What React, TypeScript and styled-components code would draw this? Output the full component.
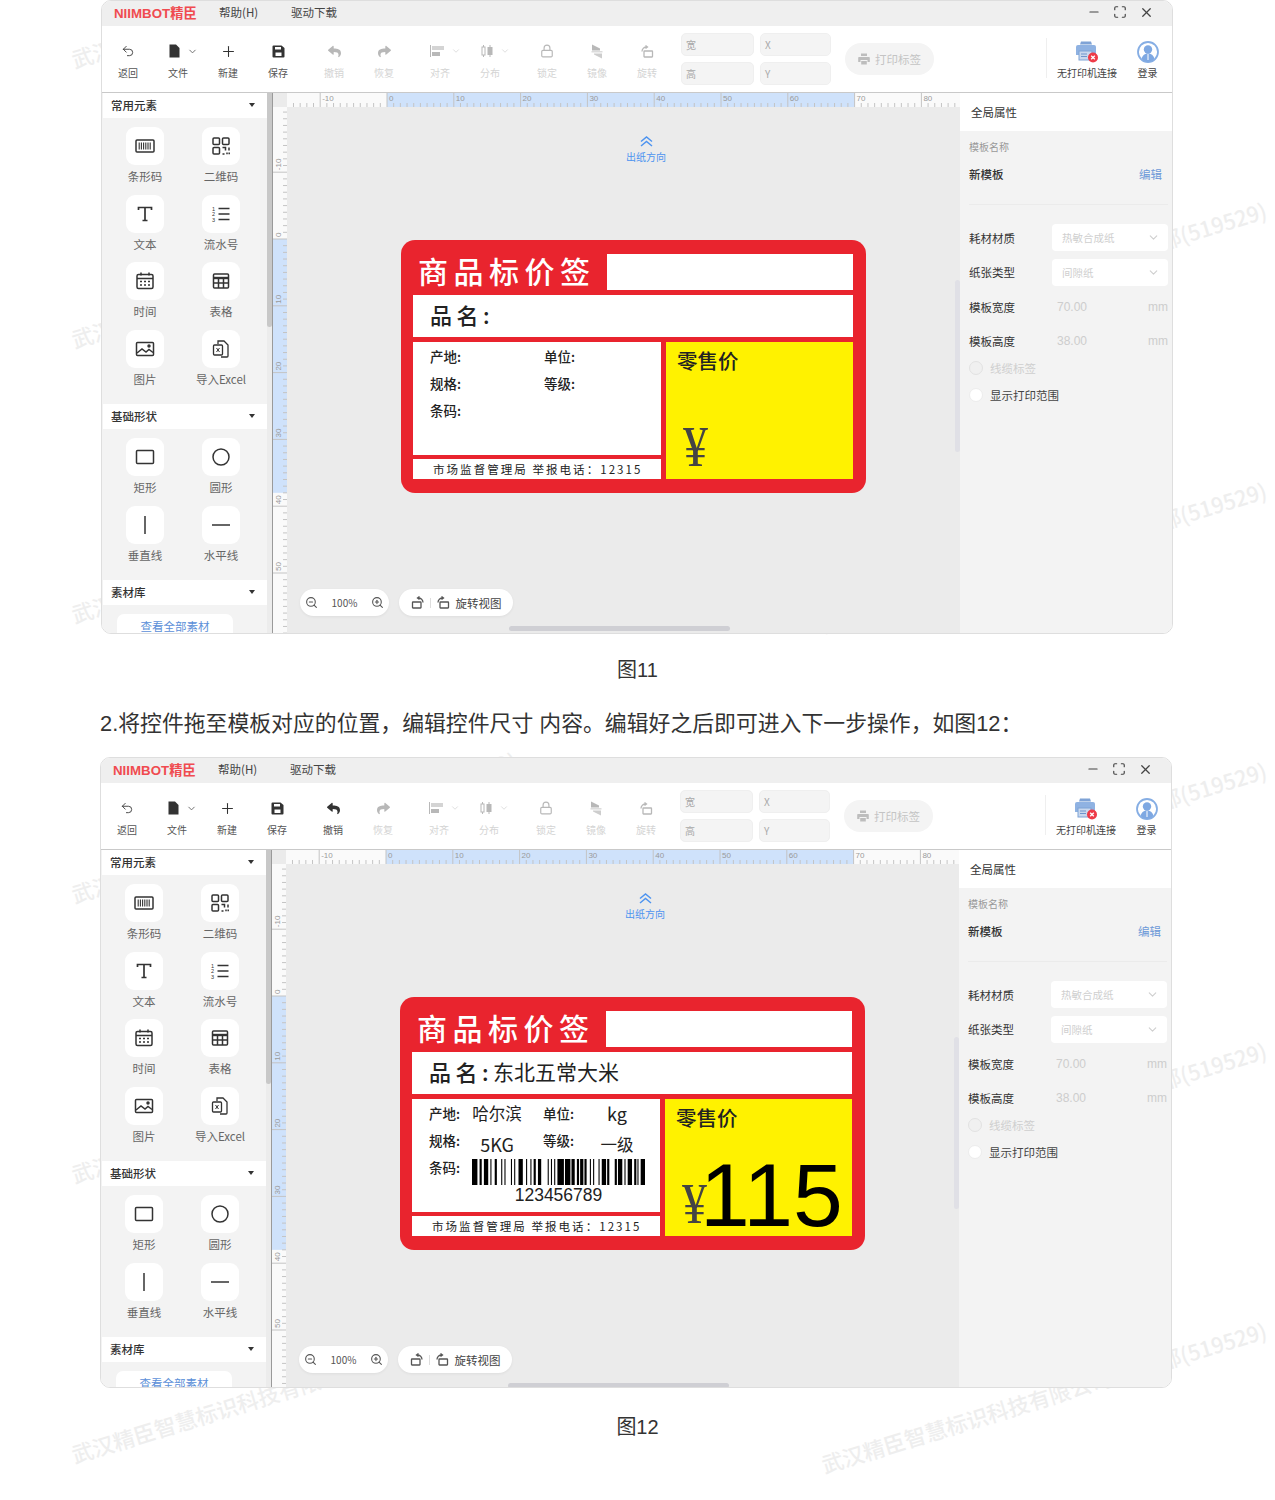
import * as React from "react";
import styled, { createGlobalStyle } from "styled-components";
import { ChevronDown, Lock, Maximize, Minus, Plus, Undo2, X, ZoomIn, ZoomOut } from "lucide-react";
import { FaReply, FaShare } from "react-icons/fa";

const CJK = `"Noto Sans CJK SC", "Noto Sans", sans-serif`;
const MM = 6.68;

const GlobalStyle = createGlobalStyle`
    body {
        margin: 0;
        background: #fff;
        font-family: ${CJK};
    }
`;

const Page = styled.div`
    position: relative;
    width: 1275px;
    height: 1500px;
    overflow: hidden;
    background: #fff;
`;

const Watermark = styled.div<{ $x: number; $y: number }>`
    position: absolute;
    left: ${(p) => p.$x}px;
    top: ${(p) => p.$y}px;
    transform: rotate(-17deg);
    transform-origin: left center;
    white-space: nowrap;
    font-size: 21.6px;
    line-height: 24px;
    color: #eeeeee;
    font-weight: 500;
`;

const Flow = styled.div`
    position: relative;
    z-index: 1;
    display: flex;
    flex-direction: column;
`;

const Caption = styled.div<{ $top: number }>`
    margin-top: ${(p) => p.$top}px;
    text-align: center;
    font-size: 20px;
    line-height: 28px;
    color: #333;
    font-family: "Liberation Sans", ${CJK};
`;

const Paragraph = styled.div`
    margin: 26px 0 19px 100px;
    font-size: 21.85px;
    line-height: 28px;
    color: #333;
    white-space: nowrap;
    font-family: "Liberation Sans", ${CJK};
`;

const Win = styled.div<{ $left: number; $height: number }>`
    margin-left: ${(p) => p.$left}px;
    width: 1072px;
    height: ${(p) => p.$height}px;
    box-sizing: border-box;
    display: flex;
    flex-direction: column;
    border: 1px solid #dedede;
    border-radius: 10px;
    overflow: hidden;
    background: #fff;
`;

const TitleBar = styled.div`
    height: 25px;
    flex: none;
    box-sizing: border-box;
    display: flex;
    align-items: center;
    background: #efefef;
    padding: 0 0 3px 12px;
    font-size: 11.5px;
    color: #444;
`;

const Logo = styled.div`
    width: 105px;
    font-family: "Liberation Sans", ${CJK};
    font-size: 13.3px;
    font-weight: 700;
    color: #f04b50;
    white-space: nowrap;
`;

const MenuItem = styled.div<{ $width: number }>`
    width: ${(p) => p.$width}px;
`;

const WinControls = styled.div`
    margin-left: auto;
    display: flex;
    align-items: center;
    gap: 12px;
    padding-right: 18px;
    color: #444;
`;

const Toolbar = styled.div`
    height: 66px;
    flex: none;
    display: flex;
    align-items: stretch;
    padding-left: 1px;
    border-bottom: 1px solid #c9c9c9;
    background: #fff;
`;

const ToolItem = styled.div<{ $off?: boolean; $gap?: number }>`
    width: 50px;
    margin-left: ${(p) => p.$gap ?? 0}px;
    display: flex;
    flex-direction: column;
    align-items: center;
    padding-top: 16px;
    box-sizing: border-box;
    color: ${(p) => (p.$off ? "#b8b8b8" : "#333")};
`;

const ToolIcon = styled.div<{ $caret?: boolean }>`
    height: 18px;
    display: flex;
    align-items: center;
    gap: ${(p) => (p.$caret ? 7 : 0)}px;
    margin-left: ${(p) => (p.$caret ? 10 : 0)}px;
`;

const ToolLabel = styled.div<{ $off?: boolean }>`
    margin-top: 6px;
    font-size: 10px;
    line-height: 14px;
    color: ${(p) => (p.$off ? "#d4d4d4" : "#555")};
`;

const Caret = styled(ChevronDown)<{ $off?: boolean }>`
    color: ${(p) => (p.$off ? "#d8d8d8" : "#666")};
`;

const FieldGrid = styled.div`
    margin-left: 9px;
    margin-top: 7px;
    display: grid;
    grid-template-columns: 73px 71px;
    grid-auto-rows: 23px;
    gap: 6px;
`;

const Field = styled.div`
    background: #f4f4f4;
    border-radius: 5px;
    border: 1px solid #efefef;
    box-sizing: border-box;
    padding-left: 4px;
    font-size: 10px;
    line-height: 22px;
    color: #a9a9a9;
`;

const PrintButton = styled.div`
    margin: 17px 0 0 14px;
    width: 89px;
    height: 32px;
    border-radius: 16px;
    background: #f4f4f4;
    display: flex;
    align-items: center;
    justify-content: center;
    gap: 5px;
    font-size: 11.5px;
    color: #c4c4c4;
`;

const ToolbarEnd = styled.div`
    margin-left: auto;
    margin-top: 12px;
    height: 40px;
    display: flex;
    border-left: 1px solid #efefef;
    padding-right: 4px;
`;

const StatusItem = styled.div<{ $width: number }>`
    width: ${(p) => p.$width}px;
    padding-top: 2px;
    display: flex;
    flex-direction: column;
    align-items: center;
    font-size: 10px;
    line-height: 14px;
    color: #444;
    gap: 2px;
`;

const StatusIcon = styled.div`
    flex: none;
    height: 24px;
    display: flex;
    align-items: center;
`;

const Body = styled.div`
    flex: 1;
    min-height: 0;
    display: flex;
`;

const Sidebar = styled.div`
    width: 165px;
    flex: none;
    overflow: hidden;
    background: #f3f3f3;
    padding-left: 1px;
    box-sizing: border-box;
`;

const GroupHeader = styled.div`
    height: 25px;
    box-sizing: border-box;
    display: flex;
    align-items: center;
    justify-content: space-between;
    padding: 0 12px 1px 8px;
    background: #fff;
    font-size: 11.5px;
    font-weight: 500;
    color: #333;
`;

const CaretDown = styled.div`
    width: 0;
    height: 0;
    border-left: 3.5px solid transparent;
    border-right: 3.5px solid transparent;
    border-top: 4px solid #333;
`;

const ToolGrid = styled.div<{ $after: number }>`
    display: grid;
    grid-template-columns: 76px 76px;
    grid-auto-rows: 67.5px;
    padding: 9px 0 0 4px;
    margin-bottom: ${(p) => p.$after}px;
`;

const Element = styled.div`
    display: flex;
    flex-direction: column;
    align-items: center;
`;

const Tile = styled.div`
    width: 38px;
    height: 38px;
    border-radius: 9px;
    background: #fff;
    display: flex;
    align-items: center;
    justify-content: center;
    color: #333;
`;

const ElementLabel = styled.div`
    margin-top: 5px;
    font-size: 11.5px;
    line-height: 12px;
    color: #666;
    white-space: nowrap;
`;

const LibraryButton = styled.div`
    margin: 9px 0 0 14px;
    width: 116px;
    height: 40px;
    border-radius: 7px;
    background: #fff;
    text-align: center;
    font-size: 11.5px;
    line-height: 24px;
    color: #5b8fd8;
`;

const ScrollTrack = styled.div`
    width: 5px;
    flex: none;
    background: #ececec;
    border-right: 1px solid #9a9a9a;
`;

const ScrollThumb = styled.div`
    height: 234px;
    background: #c8c8c8;
    border-radius: 0 0 3px 3px;
`;

const Stage = styled.div`
    flex: 1;
    min-width: 0;
    display: flex;
    flex-direction: column;
`;

const RulerRow = styled.div`
    height: 14px;
    flex: none;
    display: flex;
    background: #fafafa;
`;

const RulerCorner = styled.div`
    width: 14px;
    background: #ebebeb;
`;

const StageRow = styled.div`
    flex: 1;
    min-height: 0;
    display: flex;
`;

const RulerLeft = styled.div`
    width: 14px;
    flex: none;
    overflow: hidden;
    background: #fafafa;
`;

const Canvas = styled.div`
    position: relative;
    flex: 1;
    background: #ebebeb;
    padding: 29px 0 0 114px;
    overflow: hidden;
`;

const Direction = styled.div`
    width: 490px;
    height: 104px;
    display: flex;
    flex-direction: column;
    align-items: center;
    gap: 4px;
    color: #4e94f0;
    font-size: 10px;
    line-height: 12px;
`;

const Label = styled.div`
    width: 465px;
    height: 253px;
    box-sizing: border-box;
    padding: 14px 13px 14px 12px;
    border-radius: 14px;
    background: #e9242e;
    display: grid;
    grid-template-columns: 248px 187px;
    grid-template-rows: 36px 42px 113px 19px;
    column-gap: 5px;
    row-gap: 5px;
`;

const LabelTitle = styled.div`
    padding-left: 5px;
    margin-top: -2px;
    font-size: 30px;
    line-height: 36px;
    font-weight: 500;
    letter-spacing: 5.5px;
    color: #fff;
    white-space: nowrap;
`;

const LabelBlank = styled.div`
    margin-left: -59px;
    background: #fff;
`;

const NameRow = styled.div`
    grid-column: 1 / 3;
    background: #fff;
    display: flex;
    align-items: center;
    padding: 0 0 5px 17px;
    font-size: 21px;
    color: #222;
`;

const NameKey = styled.span`
    font-weight: 500;
    font-size: 22px;
    letter-spacing: 4.5px;
    white-space: pre;
`;

const SpecBox = styled.div`
    background: #fff;
    display: grid;
    grid-template-columns: 43px 71px 43px 1fr;
    grid-auto-rows: 27px;
    padding: 1px 0 0 17px;
    color: #222;
`;

const SpecKey = styled.div`
    font-size: 13.5px;
    line-height: 27px;
    font-weight: 500;
`;

const SpecValue = styled.div<{ $width: number; $size?: number; $drop?: number }>`
    width: ${(p) => p.$width}px;
    text-align: center;
    white-space: nowrap;
    font-size: ${(p) => p.$size ?? 16.5}px;
    line-height: 27px;
    margin-top: ${(p) => p.$drop ?? 0}px;
`;

const BarcodeCell = styled.div`
    grid-column: 2 / 5;
    display: flex;
    flex-direction: column;
    align-items: center;
    width: 173px;
    height: 46px;
    margin-top: 5px;
`;

const BarcodeBars = styled.svg`
    flex: none;
    display: block;
`;

const BarcodeText = styled.div`
    font-family: "Liberation Sans", sans-serif;
    font-size: 17.5px;
    line-height: 20px;
    color: #222;
`;

const PriceBox = styled.div`
    grid-column: 2;
    grid-row: 3 / 5;
    background: #fff200;
    display: flex;
    flex-direction: column;
    padding: 4px 0 0 11px;
    color: #222;
`;

const PriceTitle = styled.div`
    font-size: 20.5px;
    line-height: 28px;
    font-weight: 500;
`;

const PriceRow = styled.div`
    margin-top: auto;
    height: 88px;
    display: flex;
    align-items: flex-end;
`;

const Yen = styled.div`
    margin: 0 0 5px 6px;
    font-family: "Liberation Serif", serif;
    font-size: 50px;
    line-height: 48px;
    color: #444;
    transform: scaleY(1.15);
    transform-origin: center bottom;
`;

const PriceNumber = styled.div`
    margin: 0 0 -3px -7px;
    font-family: "Liberation Sans", sans-serif;
    font-size: 89.5px;
    line-height: 88px;
    color: #000;
`;

const LabelFooter = styled.div`
    margin-top: -1px;
    height: 20px;
    background: #fff;
    padding-left: 20px;
    font-size: 11.5px;
    line-height: 20px;
    letter-spacing: 2.05px;
    color: #222;
    white-space: nowrap;
`;

const Pill = styled.div<{ $left: number; $width: number; $gap: number }>`
    position: absolute;
    left: ${(p) => p.$left}px;
    top: 482px;
    width: ${(p) => p.$width}px;
    height: 27px;
    box-sizing: border-box;
    border-radius: 14px;
    background: #fff;
    box-shadow: 0 1px 3px rgba(0, 0, 0, 0.06);
    display: flex;
    align-items: center;
    justify-content: center;
    gap: ${(p) => p.$gap}px;
    font-size: 10px;
    color: #555;
`;

const PillDivider = styled.div`
    width: 1px;
    height: 10px;
    background: #ddd;
`;

const PillText = styled.span`
    font-size: 11.5px;
    color: #444;
`;

const CanvasScrollV = styled.div`
    position: absolute;
    right: 0;
    top: 173px;
    width: 5px;
    height: 172px;
    border-radius: 3px;
    background: #e0e0e6;
`;

const CanvasScrollH = styled.div`
    position: absolute;
    left: 222px;
    top: 519px;
    width: 221px;
    height: 5px;
    border-radius: 3px;
    background: #cfcfd4;
`;

const Panel = styled.div`
    width: 212px;
    flex: none;
    background: #f3f3f3;
    display: flex;
    flex-direction: column;
    font-size: 11.5px;
    color: #333;
`;

const PanelHeader = styled.div`
    height: 38px;
    padding-left: 11px;
    background: #fff;
    line-height: 38px;
`;

const PanelBody = styled.div`
    padding: 9px 4px 0 9px;
    display: flex;
    flex-direction: column;
`;

const SmallLabel = styled.div`
    font-size: 10px;
    line-height: 14px;
    color: #999;
`;

const NameLine = styled.div`
    margin-top: 12px;
    padding-right: 6px;
    display: flex;
    justify-content: space-between;
    line-height: 16px;
    font-weight: 500;
`;

const EditLink = styled.span`
    font-weight: 400;
    color: #6d9ad8;
`;

const PanelRule = styled.div`
    margin: 22px 0 19px;
    height: 1px;
    background: #ebebeb;
`;

const PropRow = styled.div`
    height: 27px;
    margin-bottom: 7.5px;
    display: flex;
    align-items: center;
    justify-content: space-between;
`;

const Select = styled.div`
    width: 116px;
    height: 27px;
    box-sizing: border-box;
    padding: 0 8px 0 10px;
    border-radius: 4px;
    background: #fff;
    display: flex;
    align-items: center;
    justify-content: space-between;
    font-size: 10.5px;
    color: #cfcfcf;
`;

const Measure = styled.div`
    width: 116px;
    display: flex;
    align-items: center;
    justify-content: space-between;
    padding-left: 5px;
    box-sizing: border-box;
    color: #cdcdcd;
    font-family: "Liberation Sans", sans-serif;
    font-size: 12px;
`;

const CheckList = styled.div`
    margin-top: -7px;
`;

const CheckRow = styled.div<{ $off?: boolean }>`
    height: 26.5px;
    display: flex;
    align-items: center;
    gap: 7px;
    color: ${(p) => (p.$off ? "#cfcfcf" : "#444")};
`;

const Check = styled.div<{ $off?: boolean }>`
    width: 12px;
    height: 12px;
    border-radius: 50%;
    background: ${(p) => (p.$off ? "#f0f0f0" : "#fff")};
    border: 1px solid ${(p) => (p.$off ? "#e2e2e2" : "#ececec")};
`;

const Glyph = ({ children, size = 20, view = 20 }: { children: React.ReactNode; size?: number; view?: number }) => (
    <svg width={size} height={size} viewBox={`0 0 ${view} ${view}`} fill="none" stroke="currentColor" strokeWidth={1.5}>
        {children}
    </svg>
);

const FileIcon = () => (
    <svg width="11" height="14" viewBox="0 0 11 14" fill="currentColor">
        <path d="M0.5 0.5h6.5l3.5 3.5v9.5H0.5z" />
    </svg>
);

const SaveIcon = () => (
    <svg width="13" height="13" viewBox="0 0 13 13" fill="currentColor">
        <path fillRule="evenodd" d="M1.5 0.5h8l3 2.5v8.5a1 1 0 0 1-1 1h-10a1 1 0 0 1-1-1v-10a1 1 0 0 1 1-1zM3 2v2.5h6V2zM3.5 7.5v3.5h6V7.5z" />
    </svg>
);

const AlignIcon = () => (
    <svg width="14" height="14" viewBox="0 0 14 14" fill="currentColor">
        <rect x="0" y="1" width="1" height="12" />
        <rect x="2" y="2" width="12" height="4" opacity="0.6" />
        <rect x="2" y="8" width="8" height="4" />
    </svg>
);

const DistributeIcon = () => (
    <svg width="12" height="14" viewBox="0 0 12 14" fill="none" stroke="currentColor">
        <rect x="1" y="3" width="3" height="8" />
        <rect x="7" y="3.5" width="4" height="7" fill="currentColor" />
        <path d="M2.5 1v2M2.5 11v2M9 1v2M9 11v2" />
    </svg>
);

const MirrorIcon = () => (
    <svg width="12" height="15" viewBox="0 0 12 15" fill="currentColor">
        <path d="M1 0.5l8 4v2h-8z" />
        <path d="M0.5 7.5h11v0.8h-11z" />
        <path d="M3 9.5h8v5l-3-1.5-5-2.5z" opacity="0.7" />
    </svg>
);

const RotateLeftIcon = () => (
    <svg width="13" height="13" viewBox="0 0 13 13" fill="none" stroke="currentColor" strokeWidth="1.3">
        <rect x="3" y="6" width="8.5" height="6" rx="0.5" />
        <path d="M1 6.5c0-3 2-4.5 5-4.5M4.5 0.5L6.5 2 4.5 3.5" />
    </svg>
);

const RotateRightIcon = () => (
    <svg width="13" height="13" viewBox="0 0 13 13" fill="none" stroke="currentColor" strokeWidth="1.3">
        <rect x="1.5" y="6" width="8.5" height="6" rx="0.5" />
        <path d="M12 6.5c0-3-2-4.5-5-4.5M8.5 0.5L6.5 2 8.5 3.5" />
    </svg>
);

const FeedArrows = () => (
    <svg width="13" height="11" viewBox="0 0 13 11" fill="none" stroke="currentColor" strokeWidth="1.5">
        <path d="M1 5.5L6.5 1 12 5.5M1 10L6.5 5.5 12 10" />
    </svg>
);

const PrinterSmall = () => (
    <svg width="12" height="12" viewBox="0 0 12 12" fill="#bdbdbd">
        <path d="M3 0.5h6v2.5H3zM1 4h10a0.8 0.8 0 0 1 0.8 0.8V9H9.5V7h-7v2H0.2V4.8A0.8 0.8 0 0 1 1 4zM3.2 8h5.6v3.5H3.2z" />
    </svg>
);

const PrinterStatus = () => (
    <svg width="24" height="24" viewBox="0 0 24 24">
        <path d="M6 1.5h10l1 3H5z" fill="#7fa3d6" />
        <path d="M3 5h16a2 2 0 0 1 2 2v8H1V7a2 2 0 0 1 2-2z" fill="#8fb2e2" />
        <rect x="4" y="11" width="13" height="9" fill="#c9d8ee" stroke="#7fa3d6" />
        <path d="M6 14h6M6 16.5h6" stroke="#6f95cc" />
        <circle cx="18" cy="17.5" r="5" fill="#ee3b48" />
        <path d="M16.2 15.7l3.6 3.6M19.8 15.7l-3.6 3.6" stroke="#fff" strokeWidth="1.3" />
    </svg>
);

const UserStatus = () => (
    <svg width="22" height="22" viewBox="0 0 22 22">
        <circle cx="11" cy="11" r="10" fill="#fff" stroke="#86aee4" strokeWidth="1.8" />
        <circle cx="11" cy="8.5" r="4.2" fill="#7ea8e2" />
        <path d="M4.5 18c1-4 3.5-5.5 6.5-5.5s5.5 1.5 6.5 5.5a9 9 0 0 1-13 0z" fill="#7ea8e2" />
        <path d="M11 13v6" stroke="#fff" strokeWidth="1" />
    </svg>
);

const elementGlyphs: Record<string, React.ReactNode> = {
    barcode: (
        <>
            <rect x="1" y="4" width="18" height="12" rx="1" />
            <path d="M4.2 6.5v7M6.4 6.5v7M8.6 6.5v7M10.8 6.5v7M13 6.5v7M15.2 6.5v7" strokeWidth="1.1" />
        </>
    ),
    qr: (
        <>
            <rect x="2" y="2" width="6.5" height="6.5" rx="1" />
            <rect x="11.5" y="2" width="6.5" height="6.5" rx="1" />
            <rect x="2" y="11.5" width="6.5" height="6.5" rx="1" />
            <path d="M11.5 11.5h3v3M18 11.5v3M11.5 18h2M16 16.5v1.8M18.2 16.5v1.8" />
        </>
    ),
    text: (
        <>
            <path d="M3.5 6V3.5h13V6M10 3.5v13M7.5 16.5h5" strokeWidth="1.7" />
        </>
    ),
    serial: (
        <>
            <path d="M7.5 4.5h11M7.5 10h11M7.5 15.5h11" />
            <text x="1" y="6.5" fontSize="5.5" fill="currentColor" stroke="none" fontFamily="Liberation Sans">1</text>
            <text x="1" y="12" fontSize="5.5" fill="currentColor" stroke="none" fontFamily="Liberation Sans">2</text>
            <text x="1" y="17.5" fontSize="5.5" fill="currentColor" stroke="none" fontFamily="Liberation Sans">3</text>
        </>
    ),
    date: (
        <>
            <rect x="2" y="3.5" width="16" height="14" rx="1.5" />
            <path d="M2 7.5h16M6 1.5v3M14 1.5v3" />
            <path d="M5 10.5h2M9 10.5h2M13 10.5h2M5 14h2M9 14h2M13 14h2" />
        </>
    ),
    table: (
        <>
            <rect x="2.5" y="3" width="15" height="14" rx="1" />
            <path d="M2.5 7h15" strokeWidth="2.4" />
            <path d="M2.5 12h15M7.5 7v10M12.5 7v10" />
        </>
    ),
    image: (
        <>
            <rect x="1.5" y="3.5" width="17" height="13" rx="1" />
            <path d="M2 14l5-4 4 3 3-2.5 4 3" />
            <circle cx="14" cy="7" r="1" fill="currentColor" />
        </>
    ),
    excel: (
        <>
            <path d="M7 5V2h6l4 4v11a1 1 0 0 1-1 1H10" strokeWidth="1.3" />
            <rect x="2.5" y="6" width="9" height="10" rx="1" strokeWidth="1.3" />
            <path d="M5.5 9l3 4M8.5 9l-3 4" strokeWidth="1" />
        </>
    ),
    rect: <rect x="1.5" y="3.5" width="17" height="13" rx="1" />,
    circle: <circle cx="10" cy="10" r="8" />,
    vline: <path d="M10 1v18" />,
    hline: <path d="M1 10h18" />,
};

const commonElements = [
    ["barcode", "条形码"],
    ["qr", "二维码"],
    ["text", "文本"],
    ["serial", "流水号"],
    ["date", "时间"],
    ["table", "表格"],
    ["image", "图片"],
    ["excel", "导入Excel"],
];

const shapeElements = [
    ["rect", "矩形"],
    ["circle", "圆形"],
    ["vline", "垂直线"],
    ["hline", "水平线"],
];

const ticks = Array.from({ length: 110 }, (_, i) => i - 20);

const RulerTop = () => (
    <svg width="673" height="14">
        <rect x="100" width={70 * MM} height="14" fill="#cfe2fb" />
        {ticks.map((t) => {
            const x = 100 + t * MM;
            if (x < 0 || x > 673) return null;
            const major = t % 10 === 0;
            return <line key={t} x1={x} x2={x} y1={major ? 0 : 10} y2="14" stroke="#c4c4c4" strokeWidth="1" />;
        })}
        {ticks
            .filter((t) => t % 10 === 0 && 100 + t * MM >= 0 && 100 + t * MM < 673)
            .map((t) => (
                <text key={t} x={102 + t * MM} y="8" fontSize="8" fill="#9a9a9a" fontFamily="Liberation Sans">
                    {t}
                </text>
            ))}
    </svg>
);

const RulerSide = () => (
    <svg width="14" height="527">
        <rect y="132" width="14" height={38 * MM} fill="#cfe2fb" />
        {ticks.map((t) => {
            const y = 132 + t * MM;
            if (y < 0 || y > 527) return null;
            const major = t % 10 === 0;
            return <line key={t} y1={y} y2={y} x1={major ? 0 : 10} x2="14" stroke="#c4c4c4" strokeWidth="1" />;
        })}
        {ticks
            .filter((t) => t % 10 === 0 && 132 + t * MM >= 0 && 132 + t * MM < 527)
            .map((t) => (
                <text
                    key={t}
                    x="8"
                    y={130 + t * MM}
                    fontSize="8"
                    fill="#9a9a9a"
                    fontFamily="Liberation Sans"
                    transform={`rotate(-90 8 ${130 + t * MM})`}
                >
                    {t}
                </text>
            ))}
    </svg>
);

const barWidths = [5, 2, 2, 2, 4, 2, 1, 3, 2, 4, 1, 2, 1, 5, 1, 2, 1, 3, 4, 3, 1, 3, 1, 2, 2, 2, 3, 6, 1, 2, 1, 2, 1, 2, 6, 1, 5, 1, 3, 2, 2, 1, 3, 1, 2, 3, 1, 2, 1, 4, 1, 2, 4, 1, 2, 5, 2, 1, 4, 2, 1, 2, 4, 2, 2, 1, 1, 2, 4];

const Barcode = () => {
    let x = 0;
    const bars: React.ReactNode[] = [];
    barWidths.forEach((w, i) => {
        if (i % 2 === 0) bars.push(<rect key={i} x={x} width={w} height="26" fill="#000" />);
        x += w;
    });
    return (
        <BarcodeBars width="173" height="26" viewBox={`0 0 ${x} 26`} preserveAspectRatio="none">
            {bars}
        </BarcodeBars>
    );
};

const PriceLabel = ({ filled }: { filled: boolean }) => (
    <Label>
        <LabelTitle>商品标价签</LabelTitle>
        <LabelBlank />
        <NameRow>
            <NameKey>品名:</NameKey>
            {filled && "东北五常大米"}
        </NameRow>
        <SpecBox>
            <SpecKey>产地:</SpecKey>
            <SpecValue $width={50}>{filled ? "哈尔滨" : ""}</SpecValue>
            <SpecKey>单位:</SpecKey>
            <SpecValue $width={62} $size={18}>{filled ? "kg" : ""}</SpecValue>
            <SpecKey>规格:</SpecKey>
            <SpecValue $width={50} $size={18} $drop={4}>{filled ? "5KG" : ""}</SpecValue>
            <SpecKey>等级:</SpecKey>
            <SpecValue $width={62} $size={16.5} $drop={4}>{filled ? "一级" : ""}</SpecValue>
            <SpecKey>条码:</SpecKey>
            {filled && (
                <BarcodeCell>
                    <Barcode />
                    <BarcodeText>123456789</BarcodeText>
                </BarcodeCell>
            )}
        </SpecBox>
        <PriceBox>
            <PriceTitle>零售价</PriceTitle>
            <PriceRow>
                <Yen>¥</Yen>
                {filled && <PriceNumber>115</PriceNumber>}
            </PriceRow>
        </PriceBox>
        <LabelFooter>市场监督管理局 举报电话：12315</LabelFooter>
    </Label>
);

const ElementGrid = ({ items, after }: { items: string[][]; after: number }) => (
    <ToolGrid $after={after}>
        {items.map(([key, label]) => (
            <Element key={key}>
                <Tile>
                    <Glyph>{elementGlyphs[key]}</Glyph>
                </Tile>
                <ElementLabel>{label}</ElementLabel>
            </Element>
        ))}
    </ToolGrid>
);

const AppWindow = ({ filled, left, height }: { filled: boolean; left: number; height: number }) => (
    <Win $left={left} $height={height}>
        <TitleBar>
            <Logo>NIIMBOT精臣</Logo>
            <MenuItem $width={72}>帮助(H)</MenuItem>
            <MenuItem $width={60}>驱动下载</MenuItem>
            <WinControls>
                <Minus size={14} />
                <Maximize size={14} />
                <X size={15} />
            </WinControls>
        </TitleBar>
        <Toolbar>
            <ToolItem>
                <ToolIcon><Undo2 size={14} strokeWidth={1.5} /></ToolIcon>
                <ToolLabel>返回</ToolLabel>
            </ToolItem>
            <ToolItem>
                <ToolIcon $caret><FileIcon /><Caret size={11} /></ToolIcon>
                <ToolLabel>文件</ToolLabel>
            </ToolItem>
            <ToolItem>
                <ToolIcon><Plus size={17} strokeWidth={1.5} /></ToolIcon>
                <ToolLabel>新建</ToolLabel>
            </ToolItem>
            <ToolItem>
                <ToolIcon><SaveIcon /></ToolIcon>
                <ToolLabel>保存</ToolLabel>
            </ToolItem>
            <ToolItem $gap={6} $off={!filled}>
                <ToolIcon><FaReply size={13} /></ToolIcon>
                <ToolLabel $off={!filled}>撤销</ToolLabel>
            </ToolItem>
            <ToolItem $off>
                <ToolIcon><FaShare size={13} /></ToolIcon>
                <ToolLabel $off>恢复</ToolLabel>
            </ToolItem>
            <ToolItem $gap={6} $off>
                <ToolIcon $caret><AlignIcon /><Caret size={10} $off /></ToolIcon>
                <ToolLabel $off>对齐</ToolLabel>
            </ToolItem>
            <ToolItem $off>
                <ToolIcon $caret><DistributeIcon /><Caret size={10} $off /></ToolIcon>
                <ToolLabel $off>分布</ToolLabel>
            </ToolItem>
            <ToolItem $gap={7} $off>
                <ToolIcon><Lock size={14} /></ToolIcon>
                <ToolLabel $off>锁定</ToolLabel>
            </ToolItem>
            <ToolItem $off>
                <ToolIcon><MirrorIcon /></ToolIcon>
                <ToolLabel $off>镜像</ToolLabel>
            </ToolItem>
            <ToolItem $off>
                <ToolIcon><RotateLeftIcon /></ToolIcon>
                <ToolLabel $off>旋转</ToolLabel>
            </ToolItem>
            <FieldGrid>
                <Field>宽</Field>
                <Field>X</Field>
                <Field>高</Field>
                <Field>Y</Field>
            </FieldGrid>
            <PrintButton>
                <PrinterSmall />
                打印标签
            </PrintButton>
            <ToolbarEnd>
                <StatusItem $width={80}>
                    <StatusIcon><PrinterStatus /></StatusIcon>
                    无打印机连接
                </StatusItem>
                <StatusItem $width={41}>
                    <StatusIcon><UserStatus /></StatusIcon>
                    登录
                </StatusItem>
            </ToolbarEnd>
        </Toolbar>
        <Body>
            <Sidebar>
                <GroupHeader>常用元素<CaretDown /></GroupHeader>
                <ElementGrid items={commonElements} after={7} />
                <GroupHeader>基础形状<CaretDown /></GroupHeader>
                <ElementGrid items={shapeElements} after={7} />
                <GroupHeader>素材库<CaretDown /></GroupHeader>
                <LibraryButton>查看全部素材</LibraryButton>
            </Sidebar>
            <ScrollTrack>
                <ScrollThumb />
            </ScrollTrack>
            <Stage>
                <RulerRow>
                    <RulerCorner />
                    <RulerTop />
                </RulerRow>
                <StageRow>
                    <RulerLeft>
                        <RulerSide />
                    </RulerLeft>
                    <Canvas>
                        <Direction>
                            <FeedArrows />
                            出纸方向
                        </Direction>
                        <PriceLabel filled={filled} />
                        <Pill $left={13} $width={89} $gap={14}>
                            <ZoomOut size={13} />
                            100%
                            <ZoomIn size={13} />
                        </Pill>
                        <Pill $left={112} $width={114} $gap={6}>
                            <RotateRightIcon />
                            <PillDivider />
                            <RotateLeftIcon />
                            <PillText>旋转视图</PillText>
                        </Pill>
                        <CanvasScrollV />
                        <CanvasScrollH />
                    </Canvas>
                </StageRow>
            </Stage>
            <Panel>
                <PanelHeader>全局属性</PanelHeader>
                <PanelBody>
                    <SmallLabel>模板名称</SmallLabel>
                    <NameLine>
                        新模板
                        <EditLink>编辑</EditLink>
                    </NameLine>
                    <PanelRule />
                    <PropRow>
                        耗材材质
                        <Select>热敏合成纸<ChevronDown size={13} /></Select>
                    </PropRow>
                    <PropRow>
                        纸张类型
                        <Select>间隙纸<ChevronDown size={13} /></Select>
                    </PropRow>
                    <PropRow>
                        模板宽度
                        <Measure><span>70.00</span><span>mm</span></Measure>
                    </PropRow>
                    <PropRow>
                        模板高度
                        <Measure><span>38.00</span><span>mm</span></Measure>
                    </PropRow>
                    <CheckList>
                        <CheckRow $off><Check $off />线缆标签</CheckRow>
                        <CheckRow><Check />显示打印范围</CheckRow>
                    </CheckList>
                </PanelBody>
            </Panel>
        </Body>
    </Win>
);

const watermarkText = "武汉精臣智慧标识科技有限公司-技术部(519529)";
const leftMarks = [48, 328, 603, 883, 1163, 1443];
const rightMarks = [333, 613, 893, 1173, 1453];

export default function App() {
    return (
        <Page>
            <GlobalStyle />
            {leftMarks.map((y) => (
                <Watermark key={y} $x={72} $y={y}>{watermarkText}</Watermark>
            ))}
            {rightMarks.map((y) => (
                <Watermark key={y} $x={822} $y={y}>{watermarkText}</Watermark>
            ))}
            <Flow>
                <AppWindow filled={false} left={101} height={634} />
                <Caption $top={22}>图11</Caption>
                <Paragraph>2.将控件拖至模板对应的位置，编辑控件尺寸 内容。编辑好之后即可进入下一步操作，如图12：</Paragraph>
                <AppWindow filled left={100} height={631} />
                <Caption $top={25}>图12</Caption>
            </Flow>
        </Page>
    );
}
